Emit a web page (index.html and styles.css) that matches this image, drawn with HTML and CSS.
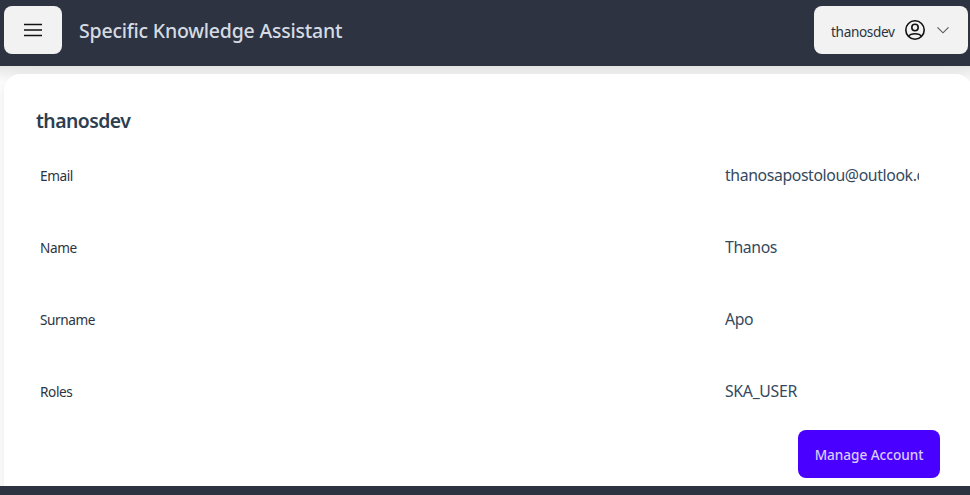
FILE: index.html
```html
<!DOCTYPE html>
<html lang="en">
<head>
<meta charset="utf-8">
<title>Specific Knowledge Assistant</title>
<link rel="stylesheet" href="styles.css">
</head>
<body>
<header class="navbar">
  <button class="btn btn-menu" aria-label="Menu">
    <svg width="24" height="24" viewBox="0 0 24 24" fill="none" stroke="#111" stroke-width="1.5"><path d="M3 6.400h18M3 12h18M3 17.600h18"/></svg>
  </button>
  <h1 class="brand">Specific Knowledge Assistant</h1>
  <button class="btn btn-user">
    <span class="user-name">thanosdev</span>
    <svg width="24" height="24" viewBox="0 0 24 24" fill="none" stroke="#111" stroke-width="1.6"><circle cx="12" cy="12" r="9.2"/><circle cx="12" cy="9.500" r="3.200"/><path d="M5.600 18.500c1-1.800 3.300-2.800 6.400-2.800s5.400 1 6.400 2.800"/></svg>
    <svg class="chevron" width="14" height="14" viewBox="0 0 14 14" fill="none" stroke="#555" stroke-width="1.1"><path d="M1.500 4.300l5.500 5.500 5.500-5.500"/></svg>
  </button>
</header>
<main class="content">
  <section class="card">
    <h2 class="card-title">thanosdev</h2>
    <dl class="fields">
      <div class="field"><dt>Email</dt><dd class="email">thanosapostolou@outlook.com</dd></div>
      <div class="field"><dt>Name</dt><dd>Thanos</dd></div>
      <div class="field"><dt>Surname</dt><dd>Apo</dd></div>
      <div class="field"><dt>Roles</dt><dd class="roles">SKA_USER</dd></div>
    </dl>
    <div class="actions"><button class="btn btn-primary">Manage Account</button></div>
  </section>
</main>
<footer class="footer"></footer>
</body>
</html>
```
FILE: styles.css
```css
* { box-sizing: border-box; }
body {
  margin: 0;
  height: 495px;
  display: flex;
  flex-direction: column;
  overflow: hidden;
  background: #fff;
  color: #34495e;
  font-family: "Noto Sans", "Open Sans", sans-serif;
}
h1, h2, dl, dd { margin: 0; }
.navbar {
  flex: none;
  height: 66px;
  padding: 6px 2px 12px 4px;
  display: flex;
  align-items: center;
  background: #2d3341;
}
.btn {
  height: 48px;
  border: 0;
  border-radius: 8px;
  display: flex;
  align-items: center;
  justify-content: center;
  font: 500 13.6px "Noto Sans", "Open Sans", sans-serif;
}
.btn-menu { width: 58px; background: #f2f2f2; padding: 0; }
.brand {
  margin-left: 17px;
  padding-top: 2px;
  font-size: 19.5px;
  line-height: 28px;
  font-weight: 500;
  letter-spacing: -.21px;
  color: #d5dbe3;
}
.btn-user {
  width: 154px;
  margin-left: auto;
  padding: 0 17px;
  justify-content: flex-start;
  background: #f2f2f2;
  color: #2b3440;
  font-weight: 400;
}
.user-name { width: 72px; text-align: left; padding-top: 2px; letter-spacing: -.34px; }
.chevron { margin-left: 9px; }
.content {
  flex: 1;
  min-height: 0;
  padding: 8px 0 0 4px;
  overflow: hidden;
  background: linear-gradient(rgba(0,0,0,.1), rgba(0,0,0,0) 16px);
}
.card {
  width: 968px;
  height: 440px;
  padding: 33px 32px 0;
  border-radius: 16px 16px 0 0;
  background: #fff;
  box-shadow: 0 4px 16px rgba(0,0,0,.09);
}
.card-title { font-size: 19.4px; line-height: 28px; font-weight: 600; letter-spacing: -.55px; color: #2c3e50; }
.field {
  height: 72px;
  display: grid;
  grid-template-columns: 685px 194px;
  align-items: center;
  padding-left: 4px;
}
.fields { padding-top: 4px; }
dt { font-size: 13.6px; color: #2b3440; letter-spacing: -.4px; }
dd { font-size: 15.8px; line-height: 24px; overflow: hidden; white-space: nowrap; letter-spacing: -.38px; }
.roles { letter-spacing: -.3px; }
.actions { display: flex; justify-content: flex-end; padding-top: 3px; }
.btn-primary { width: 142px; padding: 0; background: #4a00ff; color: #d9ccff; letter-spacing: -.03px; }
.footer { flex: none; height: 9px; background: #2d3341; }
```
